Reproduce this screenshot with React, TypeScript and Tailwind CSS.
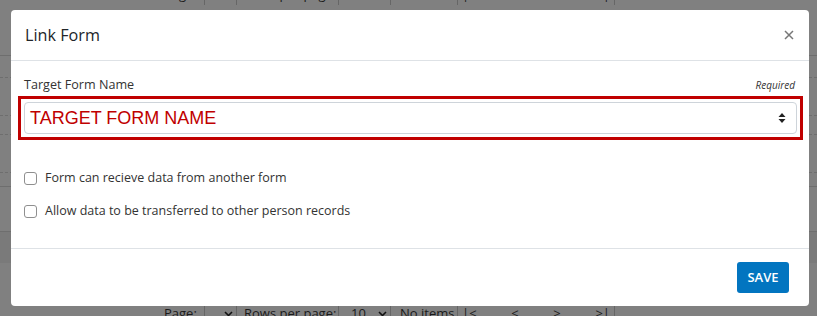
import React from "react";

function Pager() {
  return (
    <div className="flex items-center h-[20px] text-[13px] text-[#1a1a1a] whitespace-nowrap">
      <div className="w-[164px] shrink-0" />
      <span className="w-[40px] shrink-0">Page:</span>
      <div className="w-[33px] shrink-0 h-full border-l border-r border-[#666] flex items-center justify-end pr-[3px]">
        <svg width="9" height="6" viewBox="0 0 9 6"><path d="M1 1l3.5 3.5L8 1" stroke="#111" strokeWidth="1.6" fill="none" /></svg>
      </div>
      <span className="w-[101px] shrink-0 pl-[7px]">Rows per page:</span>
      <div className="w-[53px] shrink-0 h-full border-l border-r border-[#666] flex items-center justify-between pl-[12px] pr-[3px]">
        <span>10</span>
        <svg width="9" height="6" viewBox="0 0 9 6"><path d="M1 1l3.5 3.5L8 1" stroke="#111" strokeWidth="1.6" fill="none" /></svg>
      </div>
      <span className="w-[66px] shrink-0 pl-[9px]">No items</span>
      <div className="w-[158px] shrink-0 h-full border-l border-r border-[#666] flex items-center justify-between px-[4px]">
        <span>|&lt;</span>
        <span>&lt;</span>
        <span>&gt;</span>
        <span>&gt;|</span>
      </div>
    </div>
  );
}

export default function App() {
  return (
    <div className="relative w-[817px] h-[316px] overflow-hidden bg-[#808080]" style={{ fontFamily: "'Open Sans', 'Noto Sans', sans-serif" }}>
      {/* background page (dimmed) */}
      <div className="absolute left-0 right-0 top-[-15px]"><Pager /></div>
      <div className="absolute left-0 right-0 top-[55px] border-t border-[#6e6e6e]" />
      <div className="absolute left-0 right-0 top-[77px] border-t border-dashed border-[#6e6e6e]" />
      <div className="absolute left-0 right-0 top-[115px] border-t border-dashed border-[#6e6e6e]" />
      <div className="absolute left-0 right-0 top-[134px] border-t border-dashed border-[#6e6e6e]" />
      <div className="absolute left-0 right-0 top-[172px] border-t border-dashed border-[#6e6e6e]" />
      <div className="absolute left-0 right-0 top-[186px] border-t border-[#6e6e6e]" />
      <div className="absolute left-0 right-0 top-[231px] h-[32px] bg-[#7a7a7a] border-t border-[#6e6e6e]" />
      <div className="absolute left-0 right-0 top-[304px]"><Pager /></div>

      {/* modal */}
      <div className="absolute left-[11px] top-[10px] w-[798px] h-[296px] bg-white rounded-[4px] flex flex-col">
        <div className="h-[51px] flex items-center justify-between pl-[14px] pr-[15px] border-b border-[#dee2e6]">
          <span className="text-[16.2px] text-[#212529] leading-none">Link Form</span>
          <svg width="10" height="10" viewBox="0 0 10 10"><path d="M1 1l8 8M9 1l-8 8" stroke="#777" strokeWidth="1.5" /></svg>
        </div>
        <div className="flex-1 flex flex-col pl-[7px] pr-[5px] pt-[14px]">
          <div className="flex items-center justify-between pl-[6px] pr-[9px] h-[20px]">
            <span className="text-[12.6px] text-[#333]">Target Form Name</span>
            <span className="text-[10px] italic text-[#333]">Required</span>
          </div>
          <div className="mt-[1px] border-[3px] border-[#c00000] p-[3px] w-[785px]">
            <div className="h-[32px] border border-[#ced4da] rounded-[4px] flex items-center justify-between pl-[5px] pr-[10px]">
              <span className="text-[18px] text-[#c00000] leading-none" style={{ fontFamily: "'Liberation Sans', Arial, sans-serif" }}>TARGET FORM NAME</span>
              <svg width="8" height="12" viewBox="0 0 8 12"><path d="M4 1L7.5 5h-7zM4 11L0.5 7h7z" fill="#222" /></svg>
            </div>
          </div>
          <div className="mt-[32px] flex flex-col gap-[20px] pl-[6px]">
            <label className="flex items-center gap-[8px] h-[13px]">
              <span className="w-[13px] h-[13px] border border-[#8f8f8f] rounded-[3px] bg-white" />
              <span className="text-[12.5px] text-[#333]">Form can recieve data from another form</span>
            </label>
            <label className="flex items-center gap-[8px] h-[13px]">
              <span className="w-[13px] h-[13px] border border-[#8f8f8f] rounded-[3px] bg-white" />
              <span className="text-[12.5px] text-[#333]">Allow data to be transferred to other person records</span>
            </label>
          </div>
        </div>
        <div className="h-[58px] border-t border-[#dee2e6] flex items-center justify-end pr-[20px]">
          <button className="w-[52px] h-[31px] rounded-[3px] bg-[#0275c0] text-white text-[13px] font-semibold">SAVE</button>
        </div>
      </div>
    </div>
  );
}
